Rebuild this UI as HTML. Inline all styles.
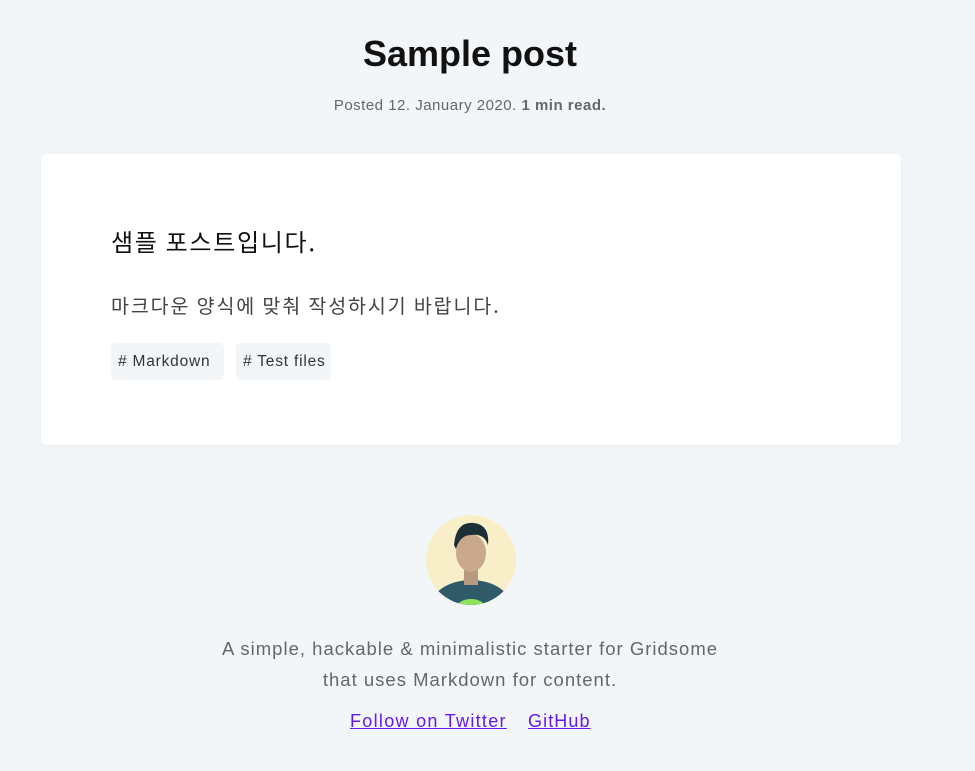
<!DOCTYPE html>
<html><head><meta charset="utf-8"><style>
body{margin:0;background:#f3f6f9;font-family:"Liberation Sans","Noto Sans CJK KR",sans-serif;width:975px;height:771px;overflow:hidden;position:relative;color:#444}
.t{position:absolute;left:0;width:940px;text-align:center;top:33px;font-size:36px;font-weight:bold;color:#111;margin:0}
.m{position:absolute;left:0;width:940px;text-align:center;top:97px;font-size:15px;color:#666;letter-spacing:0.5px}
.card{position:absolute;left:41px;top:154px;width:860px;height:291px;background:#fff;border-radius:5px;box-shadow:0 1px 4px rgba(0,0,0,.04)}
.h{position:absolute;left:70px;top:69px;font-size:24px;color:#111;font-family:"Noto Sans CJK KR",sans-serif;line-height:36px;letter-spacing:1.7px;white-space:nowrap}
.p{position:absolute;left:70px;top:136px;font-size:19.5px;color:#444;font-family:"Noto Sans CJK KR",sans-serif;line-height:30px;letter-spacing:1.9px;white-space:nowrap}
.tag{position:absolute;top:189px;height:37px;line-height:37px;background:#f3f6f9;border-radius:5px;font-size:15.5px;color:#333;padding:0 7px;box-sizing:border-box;letter-spacing:0.8px;white-space:nowrap}
.av{position:absolute;left:426px;top:515px;width:90px;height:90px;border-radius:50%;overflow:hidden;background:#f8efc8}
.f{position:absolute;left:0;width:940px;text-align:center;top:633px;font-size:18.5px;line-height:31px;color:#666;letter-spacing:1px}
.l{position:absolute;top:711px;font-size:18px;color:#6517f0;text-decoration:underline;white-space:nowrap}
</style></head><body>
<h1 class="t">Sample post</h1>
<div class="m">Posted 12. January 2020. <b>1 min read.</b></div>
<div class="card">
<div class="h">샘플 포스트입니다.</div>
<div class="p">마크다운 양식에 맞춰 작성하시기 바랍니다.</div>
<div class="tag" style="left:70px;width:113px"># Markdown</div>
<div class="tag" style="left:195px;width:95px"># Test files</div>
</div>
<div class="av"><svg width="90" height="90">
<ellipse cx="45" cy="95" rx="42" ry="30" fill="#2f5a6a"/>
<rect x="38" y="52" width="14" height="18" fill="#b89a80"/>
<ellipse cx="45" cy="38" rx="15" ry="19" fill="#c9a88c"/>
<path d="M28 30 Q30 6 48 8 Q64 10 62 30 Q58 18 45 20 Q34 20 30 34Z" fill="#1d2f36"/>
<ellipse cx="45" cy="92" rx="14" ry="8" fill="#8ee35c"/>
</svg></div>
<div class="f">A simple, hackable &amp; minimalistic starter for Gridsome<br>that uses Markdown for content.</div>
<a class="l" style="left:350px;letter-spacing:1.3px">Follow on Twitter</a>
<a class="l" style="left:528px;letter-spacing:1.1px">GitHub</a>
</body></html>
